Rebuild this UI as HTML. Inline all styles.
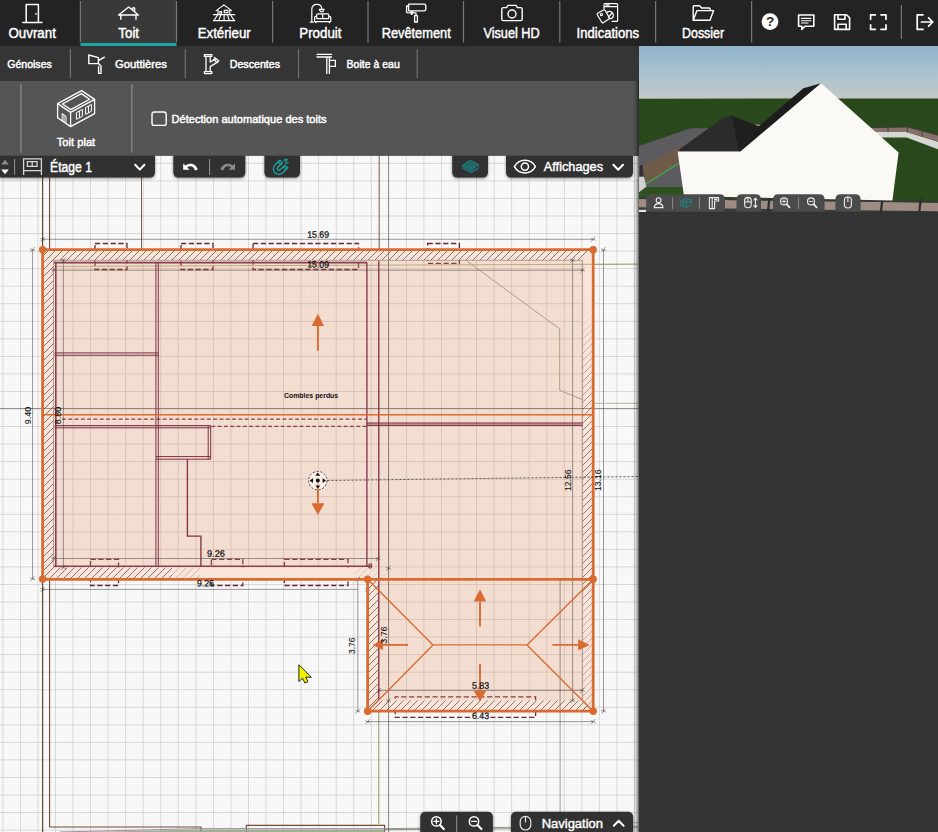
<!DOCTYPE html>
<html><head><meta charset="utf-8">
<style>
*{margin:0;padding:0}
html,body{width:938px;height:832px;overflow:hidden;background:#333}
svg{display:block;font-family:"Liberation Sans",sans-serif}
</style></head><body>
<svg width="938" height="832" viewBox="0 0 938 832">
<defs>
<pattern id="gmin" x="2.36" y="4.97" width="1.7545" height="1.7545" patternUnits="userSpaceOnUse"><path d="M0 0H1.8M0 0V1.8" stroke="#e5e5e5" stroke-width="0.5" fill="none"/></pattern>
<pattern id="gmaj" x="2.36" y="4.97" width="17.545" height="17.545" patternUnits="userSpaceOnUse"><path d="M0 0H17.6M0 0V17.6" stroke="#b4b4b4" stroke-width="0.95" fill="none"/></pattern>
<pattern id="hatch" width="4.95" height="4.95" patternUnits="userSpaceOnUse" patternTransform="rotate(45)"><path d="M2.5 0V5" stroke="#2a2222" stroke-width="0.5"/></pattern>
<pattern id="hatchl" width="4.95" height="4.95" patternUnits="userSpaceOnUse" patternTransform="rotate(45)"><path d="M2.5 0V5" stroke="#5a4a48" stroke-width="0.4"/></pattern>
<linearGradient id="sky" x1="0" y1="0" x2="0" y2="1"><stop offset="0" stop-color="#8fb3ca"/><stop offset="0.5" stop-color="#a9c3cf"/><stop offset="0.85" stop-color="#bcc6ca"/><stop offset="1" stop-color="#c6c6c6"/></linearGradient>
<linearGradient id="shr" x1="0" y1="0" x2="1" y2="0"><stop offset="0" stop-color="#000" stop-opacity="0"/><stop offset="0.5" stop-color="#000" stop-opacity="0.14"/><stop offset="1" stop-color="#000" stop-opacity="0.5"/></linearGradient>
<clipPath id="cv"><rect x="0" y="155" width="638.8" height="677"/></clipPath>
<clipPath id="c3d"><rect x="639" y="46" width="299" height="166"/></clipPath>
</defs>

<g clip-path="url(#cv)">
<rect x="0" y="155" width="639" height="677" fill="#fefefe"/>
<rect x="0" y="155" width="639" height="677" fill="url(#gmin)"/>
<rect x="0" y="155" width="639" height="677" fill="url(#gmaj)"/>
<g fill="none" stroke-width="1.2">
<path d="M42.6 155V832" stroke="#5e4a30"/>
<path d="M49.6 155V827H201V832" stroke="#6e4838" stroke-width="1.1"/>
<path d="M141.5 155V250" stroke="#7a5646" stroke-width="1"/>
<path d="M379.2 155V250" stroke="#7a5646" stroke-width="1"/>
<path d="M246.4 832V825.4H384.6V832" stroke="#7a4a3a"/>
</g>
<g fill="none" stroke-width="1">
<path d="M88 832L200 829.4H384.6V832Z" fill="#8fa586" fill-opacity="0.85" stroke="none"/><path d="M384.6 829.6L638 827.8" stroke="#86a07c" stroke-width="1.1"/>
<path d="M60 832L200 828.6H384L638 826.2" stroke="#a58a98"/>
<path d="M633 822.7H638" stroke="#c09aa0"/>
<path d="M378.8 711V826" stroke="#8c9a58"/>
</g>
<g fill="none" stroke="#6e2436" stroke-width="1.3" stroke-dasharray="5.2 2.6">
<path d="M95 243.5H127V269.5H95Z"/>
<path d="M181 243.5H213V269.5H181Z"/>
<path d="M253 243.5H358.5V269.5H253Z"/>
<path d="M427.6 243.5H459.4V263.4H427.6Z"/>
<path d="M90.5 559.3H118.5V585.5H90.5Z"/>
<path d="M211.4 559.3H242.8V585.5H211.4Z"/>
<path d="M284.4 559.3H348V585.5H284.4Z"/>
<path d="M470 717.4H395.2V696.9H535.6V717.4H490.5"/>
<path d="M62 419.1H366.3M211.4 426.3H366.3" stroke-dasharray="3.9 2.4"/>
</g>
<path d="M42.6 249.7H593.2V711.2H367.6V579.3H42.6Z" fill="#e88a5c" fill-opacity="0.245"/>
<path d="M42.6 249.7H593.2V711.2H367.6V579.3H42.6ZM53.5 260.3V567.5H378.8V700.6H582.6V260.3Z" fill="#f9e4d9" fill-rule="evenodd"/>
<clipPath id="hb1"><path d="M42.6 249.7H593.2L582.6 260.3H53.5V567.5H172V578.8H42.6Z"/></clipPath><clipPath id="hb1b"><path d="M172 567.5H200V578.8H172Z"/></clipPath><clipPath id="hb1c"><path d="M355 567.5H378.8V578.8H355Z"/></clipPath>
<clipPath id="hb2"><path d="M582.6 300H593.2V711.2H582.6Z"/></clipPath><linearGradient id="hfade" gradientUnits="userSpaceOnUse" x1="0" y1="300" x2="0" y2="711"><stop offset="0" stop-color="#2a2424" stop-opacity="0"/><stop offset="0.12" stop-color="#2a2424" stop-opacity="0.5"/><stop offset="0.35" stop-color="#1c1818" stop-opacity="0.95"/><stop offset="0.68" stop-color="#1c1818" stop-opacity="0.9"/><stop offset="0.75" stop-color="#2a2424" stop-opacity="0.55"/><stop offset="1" stop-color="#2a2424" stop-opacity="0.5"/></linearGradient>
<clipPath id="hb3"><path d="M367.6 579.3H378.8V700.6H582.6L593.2 711.2H367.6Z"/></clipPath>
<path d="M-568.0 860L142.0 150M-561.0 860L149.0 150M-554.0 860L156.0 150M-547.0 860L163.0 150M-540.0 860L170.0 150M-533.0 860L177.0 150M-526.0 860L184.0 150M-519.0 860L191.0 150M-512.0 860L198.0 150M-505.0 860L205.0 150M-498.0 860L212.0 150M-491.0 860L219.0 150M-484.0 860L226.0 150M-477.0 860L233.0 150M-470.0 860L240.0 150M-463.0 860L247.0 150M-456.0 860L254.0 150M-449.0 860L261.0 150M-442.0 860L268.0 150M-435.0 860L275.0 150M-428.0 860L282.0 150M-421.0 860L289.0 150M-414.0 860L296.0 150M-407.0 860L303.0 150M-400.0 860L310.0 150M-393.0 860L317.0 150M-386.0 860L324.0 150M-379.0 860L331.0 150M-372.0 860L338.0 150M-365.0 860L345.0 150M-358.0 860L352.0 150M-351.0 860L359.0 150M-344.0 860L366.0 150M-337.0 860L373.0 150M-330.0 860L380.0 150M-323.0 860L387.0 150M-316.0 860L394.0 150M-309.0 860L401.0 150M-302.0 860L408.0 150M-295.0 860L415.0 150M-288.0 860L422.0 150M-281.0 860L429.0 150M-274.0 860L436.0 150M-267.0 860L443.0 150M-260.0 860L450.0 150M-253.0 860L457.0 150M-246.0 860L464.0 150M-239.0 860L471.0 150M-232.0 860L478.0 150M-225.0 860L485.0 150M-218.0 860L492.0 150M-211.0 860L499.0 150M-204.0 860L506.0 150M-197.0 860L513.0 150M-190.0 860L520.0 150M-183.0 860L527.0 150M-176.0 860L534.0 150M-169.0 860L541.0 150M-162.0 860L548.0 150M-155.0 860L555.0 150M-148.0 860L562.0 150M-141.0 860L569.0 150M-134.0 860L576.0 150M-127.0 860L583.0 150M-120.0 860L590.0 150M-113.0 860L597.0 150M-106.0 860L604.0 150M-99.0 860L611.0 150M-92.0 860L618.0 150M-85.0 860L625.0 150M-78.0 860L632.0 150M-71.0 860L639.0 150M-64.0 860L646.0 150M-57.0 860L653.0 150M-50.0 860L660.0 150M-43.0 860L667.0 150M-36.0 860L674.0 150M-29.0 860L681.0 150M-22.0 860L688.0 150M-15.0 860L695.0 150M-8.0 860L702.0 150M-1.0 860L709.0 150M6.0 860L716.0 150M13.0 860L723.0 150M20.0 860L730.0 150M27.0 860L737.0 150M34.0 860L744.0 150M41.0 860L751.0 150M48.0 860L758.0 150M55.0 860L765.0 150M62.0 860L772.0 150M69.0 860L779.0 150M76.0 860L786.0 150M83.0 860L793.0 150M90.0 860L800.0 150M97.0 860L807.0 150M104.0 860L814.0 150M111.0 860L821.0 150M118.0 860L828.0 150M125.0 860L835.0 150M132.0 860L842.0 150M139.0 860L849.0 150M146.0 860L856.0 150M153.0 860L863.0 150M160.0 860L870.0 150M167.0 860L877.0 150M174.0 860L884.0 150M181.0 860L891.0 150M188.0 860L898.0 150M195.0 860L905.0 150M202.0 860L912.0 150M209.0 860L919.0 150M216.0 860L926.0 150M223.0 860L933.0 150M230.0 860L940.0 150M237.0 860L947.0 150M244.0 860L954.0 150M251.0 860L961.0 150M258.0 860L968.0 150M265.0 860L975.0 150M272.0 860L982.0 150M279.0 860L989.0 150M286.0 860L996.0 150M293.0 860L1003.0 150M300.0 860L1010.0 150M307.0 860L1017.0 150M314.0 860L1024.0 150M321.0 860L1031.0 150M328.0 860L1038.0 150M335.0 860L1045.0 150" clip-path="url(#hb1)" stroke="#1c1818" stroke-width="0.6" stroke-opacity="0.9" fill="none"/>
<path d="M-148.0 860L562.0 150M-141.0 860L569.0 150M-134.0 860L576.0 150M-127.0 860L583.0 150M-120.0 860L590.0 150M-113.0 860L597.0 150M-106.0 860L604.0 150M-99.0 860L611.0 150M-92.0 860L618.0 150M-85.0 860L625.0 150M-78.0 860L632.0 150M-71.0 860L639.0 150M-64.0 860L646.0 150M-57.0 860L653.0 150M-50.0 860L660.0 150" clip-path="url(#hb1b)" stroke="#2a2424" stroke-width="0.5" stroke-opacity="0.45" fill="none"/>
<path d="M27.0 860L737.0 150M34.0 860L744.0 150M41.0 860L751.0 150M48.0 860L758.0 150M55.0 860L765.0 150M62.0 860L772.0 150M69.0 860L779.0 150M76.0 860L786.0 150M83.0 860L793.0 150M90.0 860L800.0 150M97.0 860L807.0 150M104.0 860L814.0 150M111.0 860L821.0 150M118.0 860L828.0 150M125.0 860L835.0 150" clip-path="url(#hb1c)" stroke="#2a2424" stroke-width="0.45" stroke-opacity="0.3" fill="none"/>
<path d="M-8.0 860L702.0 150M-1.0 860L709.0 150M6.0 860L716.0 150M13.0 860L723.0 150M20.0 860L730.0 150M27.0 860L737.0 150M34.0 860L744.0 150M41.0 860L751.0 150M48.0 860L758.0 150M55.0 860L765.0 150M62.0 860L772.0 150M69.0 860L779.0 150M76.0 860L786.0 150M83.0 860L793.0 150M90.0 860L800.0 150M97.0 860L807.0 150M104.0 860L814.0 150M111.0 860L821.0 150M118.0 860L828.0 150M125.0 860L835.0 150M132.0 860L842.0 150M139.0 860L849.0 150M146.0 860L856.0 150M153.0 860L863.0 150M160.0 860L870.0 150M167.0 860L877.0 150M174.0 860L884.0 150M181.0 860L891.0 150M188.0 860L898.0 150M195.0 860L905.0 150M202.0 860L912.0 150M209.0 860L919.0 150M216.0 860L926.0 150M223.0 860L933.0 150M230.0 860L940.0 150M237.0 860L947.0 150M244.0 860L954.0 150M251.0 860L961.0 150M258.0 860L968.0 150M265.0 860L975.0 150M272.0 860L982.0 150M279.0 860L989.0 150M286.0 860L996.0 150M293.0 860L1003.0 150M300.0 860L1010.0 150M307.0 860L1017.0 150M314.0 860L1024.0 150M321.0 860L1031.0 150M328.0 860L1038.0 150M335.0 860L1045.0 150M342.0 860L1052.0 150M349.0 860L1059.0 150M356.0 860L1066.0 150M363.0 860L1073.0 150M370.0 860L1080.0 150M377.0 860L1087.0 150M384.0 860L1094.0 150M391.0 860L1101.0 150M398.0 860L1108.0 150M405.0 860L1115.0 150M412.0 860L1122.0 150M419.0 860L1129.0 150M426.0 860L1136.0 150M433.0 860L1143.0 150M440.0 860L1150.0 150M447.0 860L1157.0 150M454.0 860L1164.0 150" clip-path="url(#hb2)" stroke="url(#hfade)" stroke-width="0.55" stroke-opacity="1" fill="none"/>
<path d="M62.0 860L772.0 150M69.0 860L779.0 150M76.0 860L786.0 150M83.0 860L793.0 150M90.0 860L800.0 150M97.0 860L807.0 150M104.0 860L814.0 150M111.0 860L821.0 150M118.0 860L828.0 150M125.0 860L835.0 150M132.0 860L842.0 150M139.0 860L849.0 150M146.0 860L856.0 150M153.0 860L863.0 150M160.0 860L870.0 150M167.0 860L877.0 150M174.0 860L884.0 150M181.0 860L891.0 150M188.0 860L898.0 150M195.0 860L905.0 150M202.0 860L912.0 150M209.0 860L919.0 150M216.0 860L926.0 150M223.0 860L933.0 150M230.0 860L940.0 150M237.0 860L947.0 150M244.0 860L954.0 150M251.0 860L961.0 150M258.0 860L968.0 150M265.0 860L975.0 150M272.0 860L982.0 150M279.0 860L989.0 150M286.0 860L996.0 150M293.0 860L1003.0 150M300.0 860L1010.0 150M307.0 860L1017.0 150M314.0 860L1024.0 150M321.0 860L1031.0 150M328.0 860L1038.0 150M335.0 860L1045.0 150M342.0 860L1052.0 150M349.0 860L1059.0 150M356.0 860L1066.0 150M363.0 860L1073.0 150M370.0 860L1080.0 150M377.0 860L1087.0 150M384.0 860L1094.0 150M391.0 860L1101.0 150M398.0 860L1108.0 150M405.0 860L1115.0 150M412.0 860L1122.0 150M419.0 860L1129.0 150M426.0 860L1136.0 150M433.0 860L1143.0 150M440.0 860L1150.0 150M447.0 860L1157.0 150M454.0 860L1164.0 150" clip-path="url(#hb3)" stroke="#1c1818" stroke-width="0.6" stroke-opacity="0.9" fill="none"/>
<g fill="none" stroke="#333" stroke-width="0.65" stroke-opacity="0.75">
<path d="M388.5 155V832"/>
<path d="M0 408.5H638"/>
<path d="M63.4 259V567"/>
<path d="M572.6 260V700.6"/>
<path d="M560.1 579V832"/>
<path d="M53.5 270.2H582.6"/>
<path d="M53.5 558.5H378"/>
<path d="M378.8 690.4H582.4"/>
<path d="M42.6 239.3H593.2"/>
<path d="M32.6 249.7V578.8"/>
<path d="M603.5 249.7V711.2"/>
<path d="M42.6 589.4H358"/>
<path d="M357.8 579.3V711.2"/>
<path d="M367.6 721.6H593.2"/>
</g>
<g stroke="#333" stroke-width="0.6" stroke-opacity="0.85" fill="none">
<path d="M40.7 241.7L44.5 236.9M40.2 238.4L45.0 240.2"/>
<path d="M591.3 241.7L595.1 236.9M590.8 238.4L595.6 240.2"/>
<path d="M30.7 252.1L34.5 247.3M30.2 248.8L35.0 250.6"/>
<path d="M30.7 581.2L34.5 576.4M30.2 577.9L35.0 579.7"/>
<path d="M601.6 252.1L605.4 247.3M601.1 248.8L605.9 250.6"/>
<path d="M601.6 713.6L605.4 708.8M601.1 710.3L605.9 712.1"/>
<path d="M40.7 591.8L44.5 587.0M40.2 588.5L45.0 590.3"/>
<path d="M355.9 581.7L359.7 576.9M355.4 578.4L360.2 580.2"/>
<path d="M355.9 713.6L359.7 708.8M355.4 710.3L360.2 712.1"/>
<path d="M365.7 724.0L369.5 719.2M365.2 720.7L370.0 722.5"/>
<path d="M591.3 724.0L595.1 719.2M590.8 720.7L595.6 722.5"/>
<path d="M61.5 262.7L65.3 257.9M61.0 259.4L65.8 261.2"/>
<path d="M51.6 272.6L55.4 267.8M51.1 269.3L55.9 271.1"/>
<path d="M570.7 262.7L574.5 257.9M570.2 259.4L575.0 261.2"/>
<path d="M580.7 272.6L584.5 267.8M580.2 269.3L585.0 271.1"/>
<path d="M51.6 560.9L55.4 556.1M51.1 557.6L55.9 559.4"/>
<path d="M61.5 569.9L65.3 565.1M61.0 566.6L65.8 568.4"/>
<path d="M376.1 560.9L379.9 556.1M375.6 557.6L380.4 559.4"/>
<path d="M386.6 570.6L390.4 565.8M386.1 567.3L390.9 569.1"/>
<path d="M376.9 692.8L380.7 688.0M376.4 689.5L381.2 691.3"/>
<path d="M386.6 703.0L390.4 698.2M386.1 699.7L390.9 701.5"/>
<path d="M580.5 692.8L584.3 688.0M580.0 689.5L584.8 691.3"/>
<path d="M570.7 703.0L574.5 698.2M570.2 699.7L575.0 701.5"/>
<path d="M365.7 591.8L369.5 587.0M365.2 588.5L370.0 590.3"/>
</g>
<g fill="none" stroke-width="1">
<path d="M56 266.4L593 264.3" stroke="#a2965a" stroke-width="0.8" stroke-opacity="0.9"/>
<path d="M593 264.3L638 264.1" stroke="#9aa878" stroke-width="1.2"/>
<path d="M593 403.3H638" stroke="#a9b894" stroke-width="1"/>
<path d="M467.4 261.4L559.7 329V390.3L582.7 399.7" stroke="#9a9a78" stroke-width="0.9"/>
</g>
<g fill="none" stroke="#7d3040" stroke-width="1.3">
<path d="M54 262.6H367M55.8 262.4V566.3M54 566.3H371.4" stroke="#8a3f50" stroke-width="1.6"/>
<path d="M369 564H371.6V568H369Z" stroke-width="1"/>
<path d="M155.9 262.4V566.3M158.3 262.4V566.3" stroke-width="1"/>
<path d="M366.9 262.4V566.3"/>
<path d="M378.8 260.5V700"/>
<path d="M54.5 352.9H158.3M54.5 355.2H158.3" stroke-width="1"/>
<path d="M54.5 425.6H210.7M54.5 427.8H210.7" stroke-width="1"/>
<path d="M208.2 426V459.3M210.7 426V459.3" stroke-width="1"/>
<path d="M155.5 456.6H210.7M155.5 459.2H210.7" stroke-width="1"/>
<path d="M187.4 459V536.1H200.9V566.3"/>
<path d="M366.9 422.9H582.7M366.9 425.5H582.7" stroke-width="0.9"/>
</g>
<rect x="367" y="423" width="215.6" height="2.4" fill="#7d3040" fill-opacity="0.45"/>
<path d="M53.5 567.5V260.3H582.6V700.6" fill="none" stroke="#6a5a58" stroke-width="0.6" stroke-opacity="0.8"/>
<g fill="none" stroke="#d96b30" stroke-width="2.8" stroke-linejoin="round">
<path d="M42.6 249.7H593.2V711.2H367.6V579.3H42.6Z"/>
<path d="M367.6 579.3H593.2"/>
</g>
<g fill="none" stroke="#d96b30" stroke-width="1.4">
<path d="M42.6 414.7H593.2"/>
<path d="M367.6 579.3L433 644.9L367.6 711.2M593.2 579.3L527 644.9L593.2 711.2M433 644.9H527"/>
</g>
<circle cx="42.6" cy="249.7" r="3.7" fill="#d96b30"/>
<circle cx="593.2" cy="249.7" r="3.7" fill="#d96b30"/>
<circle cx="42.6" cy="579" r="3.7" fill="#d96b30"/>
<circle cx="367.6" cy="579.3" r="3.7" fill="#d96b30"/>
<circle cx="593.2" cy="579.3" r="3.7" fill="#d96b30"/>
<circle cx="367.6" cy="711.2" r="3.7" fill="#d96b30"/>
<circle cx="593.2" cy="711.2" r="3.7" fill="#d96b30"/>
<path d="M317.9 350.8L317.9 326.0" stroke="#d96b30" stroke-width="1.9" fill="none"/><path d="M317.9 313.8L324.1 326.0L311.7 326.0Z" fill="#d96b30"/>
<path d="M317.9 482.0L317.9 503.3" stroke="#d96b30" stroke-width="1.9" fill="none"/><path d="M317.9 515.0L311.5 503.3L324.3 503.3Z" fill="#d96b30"/>
<path d="M480.0 626.4L480.0 601.4" stroke="#d96b30" stroke-width="1.9" fill="none"/><path d="M480.0 589.2L486.2 601.4L473.8 601.4Z" fill="#d96b30"/>
<path d="M480.0 663.8L480.0 690.8" stroke="#d96b30" stroke-width="1.9" fill="none"/><path d="M480.0 701.4L473.8 690.8L486.2 690.8Z" fill="#d96b30"/>
<path d="M408.0 644.9L382.9 644.9" stroke="#d96b30" stroke-width="1.9" fill="none"/><path d="M372.7 644.9L382.9 639.8L382.9 650.0Z" fill="#d96b30"/>
<path d="M552.4 644.9L578.1 644.9" stroke="#d96b30" stroke-width="1.9" fill="none"/><path d="M589.7 644.9L578.1 650.5L578.1 639.3Z" fill="#d96b30"/>
<path d="M327.3 480.5L638 476.5" stroke="#444" stroke-width="0.8" stroke-dasharray="2.4 1.6" fill="none"/>
<circle cx="317.8" cy="480.6" r="9.2" fill="#fff" fill-opacity="0.55" stroke="#222" stroke-width="0.8" stroke-dasharray="2.2 1.6"/>
<circle cx="317.8" cy="480.6" r="2" fill="#111"/>
<path d="M317.8 472.4l2.4 3.4h-4.8zM317.8 488.8l2.4 -3.4h-4.8zM309.6 480.6l3.4 -2.4v4.8zM326 480.6l-3.4 -2.4v4.8z" fill="#111"/>
<g font-size="9.3" fill="#0a0a0a" stroke="#0a0a0a" stroke-width="0.08" font-weight="normal">
<text transform="translate(307.2 237.8) rotate(0.2)" font-size="9.4" stroke-width="0.22" textLength="21.8" lengthAdjust="spacingAndGlyphs">15.69</text>
<text transform="translate(307.2 267.6) rotate(0.2)" font-size="9.4" stroke-width="0.22" textLength="21.8" lengthAdjust="spacingAndGlyphs">15.09</text>
<text transform="translate(207.0 556.7) rotate(0.2)" font-size="9.4" stroke-width="0.22" textLength="17.8" lengthAdjust="spacingAndGlyphs">9.26</text>
<text transform="translate(196.9 586.5) rotate(0.2)" font-size="9.4" stroke-width="0.22" textLength="17.0" lengthAdjust="spacingAndGlyphs">9.26</text>
<text transform="translate(471.9 688.7) rotate(0.2)" font-size="9.4" stroke-width="0.22" textLength="17.2" lengthAdjust="spacingAndGlyphs">5.83</text>
<text transform="translate(471.9 719.0) rotate(0.2)" font-size="9.4" stroke-width="0.22" textLength="17.2" lengthAdjust="spacingAndGlyphs">6.43</text>
<text font-size="9.6" transform="translate(30.9 424.2) rotate(-90)" textLength="17.5" lengthAdjust="spacingAndGlyphs">9.40</text>
<text font-size="9.6" transform="translate(61.2 424.2) rotate(-90)" textLength="17.5" lengthAdjust="spacingAndGlyphs">8.80</text>
<text font-size="9.6" transform="translate(571.4 491) rotate(-90)" textLength="21.6" lengthAdjust="spacingAndGlyphs">12.56</text>
<text font-size="9.6" transform="translate(601.3 491) rotate(-90)" textLength="21.6" lengthAdjust="spacingAndGlyphs">13.16</text>
<text font-size="9.6" transform="translate(387 643.8) rotate(-90)" textLength="17.4" lengthAdjust="spacingAndGlyphs">3.76</text>
<text font-size="9.6" transform="translate(355.3 654) rotate(-90)" textLength="16.4" lengthAdjust="spacingAndGlyphs">3.76</text>
</g>
<text x="284" y="397.6" font-size="6.3" font-weight="bold" fill="#111" textLength="54.2" lengthAdjust="spacingAndGlyphs">Combles perdus</text>
<path d="M298.9 664.7V681.5L302.6 678.2L304.9 683L308 681.6L305.7 677.1L311.4 677.3Z" fill="#f2f200" stroke="#111" stroke-width="0.9" stroke-linejoin="round"/>
</g>
<rect x="0" y="0" width="938" height="46" fill="#232323"/>
<rect x="0" y="46" width="638.8" height="35" fill="#353535"/>
<rect x="0" y="81" width="638.8" height="74.7" fill="#555"/>
<rect x="638.8" y="46" width="300" height="786" fill="#333"/>
<g clip-path="url(#c3d)">
<rect x="639" y="46" width="299" height="53.5" fill="url(#sky)"/>
<path d="M639 98.7L938 98.4V212H639Z" fill="#29491c"/>
<path d="M639 146L690.5 128.2H760L700 200H639Z" fill="#5b5b60"/>
<path d="M641.5 166.6L682 145.8L679 163.2L646.2 183.8Z" fill="#6f5b49"/>
<path d="M646.2 183.8L679 163.2" stroke="#3fa546" stroke-width="1.4" fill="none"/>
<path d="M639 166L642.4 166L646 184.6L639 189Z" fill="#4a4a4e"/>
<path d="M640.2 165V176.6H642.6V165Z" fill="#2e2e32"/>
<path d="M639 176.8L644 176.8L646.4 186.6L639 192.4Z" fill="#d2d2d0"/>
<path d="M639 192.6L647 187H700V200H639Z" fill="#2d5220"/>
<path d="M868 132H906.6L938 141.7V149.3L906.6 137.4H868Z" fill="#d6d6d4"/>
<path d="M868 127.7L907.7 127L938 135.2V141.7L906.6 132H868Z" fill="#85706a"/>
<path d="M868 127.7L907.7 127L938 135.2" stroke="#3a3a3a" stroke-width="0.9" fill="none"/>
<path d="M888 127.4V132M907.4 127V132.2M922 131V136.8" stroke="#3a3a3a" stroke-width="0.9" fill="none"/>
<path d="M760 129H775V133H760Z" fill="#9a8478"/>
<path d="M639 192.6L647 187H684V196L639 199Z" fill="#2d5220"/>
<path d="M639 207.2L938 211.3V212H639Z" fill="#3a3a3c"/>
<path d="M639 209.8H646.2V212H639Z" fill="#e8e6e2"/>
<path d="M639 199L938 202.6V211.3L639 207.2Z" fill="#9e8c82"/>
<path d="M639 198.2L938 201.8" stroke="#37373b" stroke-width="1.7" fill="none"/>
<path d="M741 211.4L742.4 198.4" stroke="#2c2c30" stroke-width="2.2"/>
<path d="M768 211.4L769.4 198.4" stroke="#2c2c30" stroke-width="2.2"/>
<path d="M881 211.4L882.4 198.4" stroke="#2c2c30" stroke-width="2.2"/>
<path d="M919.4 211.4L920.8 198.4" stroke="#2c2c30" stroke-width="2.2"/>
<path d="M754 128L755 124.4L762.4 124.8L763 128Z" fill="#b09a90"/>
<path d="M738 151.6L759.4 125.8L803.4 88.2L821.1 83.3L741 152Z" fill="#1d1d1d"/>
<path d="M731.6 115.4L759.4 126.6L738 151.6Z" fill="#1f1f1f"/>
<path d="M677.6 151.6L680.6 148.4L721.6 119L731.6 115.4L738 151.6Z" fill="#2b2b2b"/>
<path d="M677.6 151.5H740.4L821.1 83.3L898.6 152.6L892.4 200.4L684 196Z" fill="#fbf9f5"/>
</g>
<path d="M646.2 211.6V199.6Q646.2 194.2 651.6 194.2H719.6Q725 194.2 725 199.6V211.8Z" fill="#4b4b4b"/>
<path d="M736.5 211.6V199.6Q736.5 194.2 741.9 194.2H755.6Q761 194.2 761 199.6V211.8Z" fill="#4b4b4b"/>
<path d="M773 211.6V199.6Q773 194.2 778.4 194.2H819.2Q824.6 194.2 824.6 199.6V211.8Z" fill="#4b4b4b"/>
<path d="M835.4 211.6V199.6Q835.4 194.2 840.8 194.2H855.2Q860.6 194.2 860.6 199.6V211.8Z" fill="#4b4b4b"/>
<g fill="none" stroke="#eee" stroke-width="1.1" stroke-linecap="round" stroke-linejoin="round">
<circle cx="658.6" cy="200.2" r="2.4"/><path d="M654.2 207.6C654.6 204.6 656.4 203.6 658.6 203.6C660.8 203.6 662.6 204.6 663 207.6Z"/>
<path d="M672.6 197.6V208.8M699.4 197.6V208.8M798.6 197.6V208.8" stroke="#8a8a8a" stroke-width="1"/>
<path d="M709.4 197.6H718.6V201H714.6V208.6H709.4ZM712.2 197.6V208.6M714.6 199.4H717" />
<rect x="744.6" y="197.4" width="6.6" height="10.4" rx="3.2"/><path d="M747.9 197.4V202M744.6 202H751.2M755.4 198.6V207M753.8 200L755.4 198.2L757 200M753.8 205.6L755.4 207.4L757 205.6"/>
<circle cx="784" cy="201.4" r="3.5"/><path d="M786.6 204.2L789.6 207.4" stroke-width="1.7"/><path d="M782.2 201.4H785.8M784 199.6V203.2" stroke-width="0.9"/>
<circle cx="811" cy="201.4" r="3.5"/><path d="M813.6 204.2L816.6 207.4" stroke-width="1.7"/><path d="M809.2 201.4H812.8" stroke-width="0.9"/>
<rect x="844.4" y="197" width="7" height="11" rx="3.4"/><path d="M847.9 197V201.6"/>
</g>
<g fill="none" stroke="#17908e" stroke-width="0.8" stroke-linejoin="round"><path d="M680.4 201.4L685.4 198.4L691.6 200.2V204.6L686.4 207.6L680.4 205.6ZM680.4 201.4L686.4 203.2L691.6 200.2M686.4 203.2V207.6M683 200L688.6 201.8M683.4 202.4V206.6"/></g>
<rect x="632.6" y="155" width="6.2" height="677" fill="url(#shr)"/>
<defs><filter id="ps" x="-10%" y="-30%" width="120%" height="170%"><feGaussianBlur stdDeviation="1.6"/></filter></defs>
<path d="M0 155H155V172.1Q155 177.6 149.5 177.6H0Z" fill="#000" fill-opacity="0.45" filter="url(#ps)" transform="translate(0 1)"/>
<path d="M173.3 155H245.3V172.1Q245.3 177.6 239.8 177.6H178.8Q173.3 177.6 173.3 172.1Z" fill="#000" fill-opacity="0.45" filter="url(#ps)" transform="translate(0 1)"/>
<path d="M264.4 155H300V172.1Q300 177.6 294.5 177.6H269.9Q264.4 177.6 264.4 172.1Z" fill="#000" fill-opacity="0.45" filter="url(#ps)" transform="translate(0 1)"/>
<path d="M452.2 155H488V172.1Q488 177.6 482.5 177.6H457.7Q452.2 177.6 452.2 172.1Z" fill="#000" fill-opacity="0.45" filter="url(#ps)" transform="translate(0 1)"/>
<path d="M506 155H633V172.1Q633 177.6 627.5 177.6H511.5Q506 177.6 506 172.1Z" fill="#000" fill-opacity="0.45" filter="url(#ps)" transform="translate(0 1)"/>
<path d="M420.3 832V817.3Q420.3 811.8 425.8 811.8H487.4Q492.9 811.8 492.9 817.3V832Z" fill="#000" fill-opacity="0.45" filter="url(#ps)" transform="translate(0 1)"/>
<path d="M511 832V817.3Q511 811.8 516.5 811.8H627.6Q633.1 811.8 633.1 817.3V832Z" fill="#000" fill-opacity="0.45" filter="url(#ps)" transform="translate(0 1)"/>
<path d="M0 155H155V172.1Q155 177.6 149.5 177.6H0Z" fill="#313131"/>
<path d="M173.3 155H245.3V172.1Q245.3 177.6 239.8 177.6H178.8Q173.3 177.6 173.3 172.1Z" fill="#313131"/>
<path d="M264.4 155H300V172.1Q300 177.6 294.5 177.6H269.9Q264.4 177.6 264.4 172.1Z" fill="#313131"/>
<path d="M452.2 155H488V172.1Q488 177.6 482.5 177.6H457.7Q452.2 177.6 452.2 172.1Z" fill="#313131"/>
<path d="M506 155H633V172.1Q633 177.6 627.5 177.6H511.5Q506 177.6 506 172.1Z" fill="#313131"/>
<path d="M420.3 832V817.3Q420.3 811.8 425.8 811.8H487.4Q492.9 811.8 492.9 817.3V832Z" fill="#313131"/>
<path d="M511 832V817.3Q511 811.8 516.5 811.8H627.6Q633.1 811.8 633.1 817.3V832Z" fill="#313131"/>
<rect x="0" y="150" width="638.8" height="5.7" fill="#555"/>
<path d="M1.2 164.4L5 159.8L8.8 164.4Z" fill="#8c8c8c"/><path d="M1.2 169.6L5 174.2L8.8 169.6Z" fill="#fff"/>
<rect x="14" y="159" width="1.1" height="15.6" fill="#8a8a8a"/>
<g fill="none" stroke="#d8d8d8" stroke-width="1.3"><path d="M23.6 170.6V158.8H41.4V170.6ZM23.6 170.6V175M41.4 170.6V175M27.4 161.6H32.2V166.4H27.4ZM32.2 161.6H37V166.4H32.2Z"/></g>
<text x="50" y="172.2" font-size="14" font-weight="normal" fill="#fff" stroke="#fff" stroke-width="0.45" stroke-linejoin="round" text-anchor="start" textLength="42" lengthAdjust="spacingAndGlyphs">Étage 1</text>
<path d="M135.2 164.8L139.8 169.6L144.4 164.8" fill="none" stroke="#fff" stroke-width="2" stroke-linecap="round" stroke-linejoin="round"/>
<path d="M183.2 163.4V169.8H189.6L187.2 167.4C189.6 165.6 193.6 165.8 195 170.4L197.8 169.6C195.8 163 189.4 162.4 185.4 165.6Z" fill="#fff"/>
<rect x="209" y="159" width="1.1" height="16" fill="#8a8a8a"/>
<path d="M235 163.4V169.8H228.6L231 167.4C228.6 165.6 224.6 165.8 223.2 170.4L220.4 169.6C222.4 163 228.8 162.4 232.8 165.6Z" fill="#8a8a8a"/>
<g fill="none" stroke="#19a7a3" stroke-width="1.3" stroke-linejoin="round" stroke-linecap="round"><path d="M279.6 160.2L275.6 164.2C272.4 167.4 273 171 275 172.8C277 174.8 280.6 175 283.6 172L287.6 168L284.8 165.2L280.8 169.2C279.4 170.6 278.4 170.4 277.8 169.8C277.2 169.2 277 168.2 278.4 166.8L282.4 162.8ZM278 161.8L280.8 164.6M283.2 166.8L286 169.6M284 160.4L286 159M285.6 163L288.2 162.8M287.4 159.6L285.6 161.4"/></g>
<g fill="none" stroke="#12a0a0" stroke-width="0.8" stroke-opacity="0.9" stroke-linejoin="round"><path d="M462.6 165.6L469.6 160L478.2 164.4V168.6L471 172.4L462.6 168.4ZM462.6 165.6L471 169.4L478.2 164.4M471 169.4V172.4M464.4 164.4L472.4 168.2M466.2 163L474.2 166.8M468 161.6L476 165.4M464.8 166.6V169.4M467 167.6V170.4M469 168.6V171.4M473 168.2V171.2M475.4 166.6V169.8"/></g>
<path d="M462.6 165.6L469.6 160L478.2 164.4L471 169.4Z" fill="#19a7a3" fill-opacity="0.22"/>
<path d="M514.4 166.6C519 158.2 530.8 158.2 535.4 166.6C530.8 175 519 175 514.4 166.6Z" fill="none" stroke="#fff" stroke-width="1.5"/><circle cx="524.9" cy="166.6" r="3.6" fill="none" stroke="#fff" stroke-width="1.5"/>
<text x="543.8" y="171.4" font-size="13.6" font-weight="normal" fill="#fff" stroke="#fff" stroke-width="0.45" stroke-linejoin="round" text-anchor="start" textLength="59.2" lengthAdjust="spacingAndGlyphs">Affichages</text>
<path d="M613.4 164.8L618.2 169.8L623 164.8" fill="none" stroke="#fff" stroke-width="2" stroke-linecap="round" stroke-linejoin="round"/>
<g fill="none" stroke="#fff" stroke-width="1.5" stroke-linecap="round"><circle cx="436.4" cy="821.4" r="4.7"/><path d="M439.9 825L443.8 829" stroke-width="2.2"/><path d="M434 821.4H438.8M436.4 819V823.8" stroke-width="1.3"/>
<circle cx="474" cy="821.4" r="4.7"/><path d="M477.5 825L481.4 829" stroke-width="2.2"/><path d="M471.6 821.4H476.4" stroke-width="1.3"/></g>
<rect x="456.1" y="815.4" width="1.1" height="16.6" fill="#8a8a8a"/>
<g fill="none" stroke="#e8e8e8" stroke-width="1.2"><rect x="520.2" y="816.4" width="10.6" height="13.6" rx="5.2"/><path d="M525.5 816.4V822.4"/></g>
<text x="541.7" y="827.6" font-size="13.6" font-weight="normal" fill="#fff" stroke="#fff" stroke-width="0.45" stroke-linejoin="round" text-anchor="start" textLength="61.3" lengthAdjust="spacingAndGlyphs">Navigation</text>
<path d="M613.8 825.8L618.7 820.8L623.6 825.8" fill="none" stroke="#fff" stroke-width="2" stroke-linecap="round" stroke-linejoin="round"/>
<rect x="80.5" y="0" width="96" height="46" fill="#393939"/>
<rect x="80.5" y="43" width="96" height="3" fill="#19a7a3"/>
<rect x="79.80000000000001" y="1" width="1.2" height="41.5" fill="#777"/>
<rect x="175.9" y="1" width="1.2" height="41.5" fill="#777"/>
<rect x="272.0" y="1" width="1.2" height="41.5" fill="#777"/>
<rect x="367.4" y="1" width="1.2" height="41.5" fill="#777"/>
<rect x="462.9" y="1" width="1.2" height="41.5" fill="#777"/>
<rect x="559.1999999999999" y="1" width="1.2" height="41.5" fill="#777"/>
<rect x="655.0" y="1" width="1.2" height="41.5" fill="#777"/>
<rect x="751.0" y="1" width="1.2" height="41.5" fill="#777"/>
<rect x="900.8" y="5" width="1.2" height="34" fill="#777"/>
<text x="32.2" y="37.6" font-size="14" font-weight="normal" fill="#fff" stroke="#fff" stroke-width="0.45" stroke-linejoin="round" text-anchor="middle" textLength="47.4" lengthAdjust="spacingAndGlyphs">Ouvrant</text>
<text x="128.7" y="37.6" font-size="14" font-weight="normal" fill="#fff" stroke="#fff" stroke-width="0.45" stroke-linejoin="round" text-anchor="middle" textLength="20.7" lengthAdjust="spacingAndGlyphs">Toit</text>
<text x="224.2" y="37.6" font-size="14" font-weight="normal" fill="#fff" stroke="#fff" stroke-width="0.45" stroke-linejoin="round" text-anchor="middle" textLength="53" lengthAdjust="spacingAndGlyphs">Extérieur</text>
<text x="320.4" y="37.6" font-size="14" font-weight="normal" fill="#fff" stroke="#fff" stroke-width="0.45" stroke-linejoin="round" text-anchor="middle" textLength="42.3" lengthAdjust="spacingAndGlyphs">Produit</text>
<text x="416.2" y="37.6" font-size="14" font-weight="normal" fill="#fff" stroke="#fff" stroke-width="0.45" stroke-linejoin="round" text-anchor="middle" textLength="69" lengthAdjust="spacingAndGlyphs">Revêtement</text>
<text x="511.6" y="37.6" font-size="14" font-weight="normal" fill="#fff" stroke="#fff" stroke-width="0.45" stroke-linejoin="round" text-anchor="middle" textLength="56.3" lengthAdjust="spacingAndGlyphs">Visuel HD</text>
<text x="607.8" y="37.6" font-size="14" font-weight="normal" fill="#fff" stroke="#fff" stroke-width="0.45" stroke-linejoin="round" text-anchor="middle" textLength="62.4" lengthAdjust="spacingAndGlyphs">Indications</text>
<text x="703.1" y="37.6" font-size="14" font-weight="normal" fill="#fff" stroke="#fff" stroke-width="0.45" stroke-linejoin="round" text-anchor="middle" textLength="42" lengthAdjust="spacingAndGlyphs">Dossier</text>
<g fill="none" stroke="#fff" stroke-width="1.5" stroke-linejoin="round" stroke-linecap="round">
<path d="M26.2 22.4V4.4H38.4V22.4M22.8 22.6H42"/><circle cx="36" cy="13.8" r="0.9" fill="#fff" stroke="none"/>
<path d="M118.6 15L128.7 7L138.4 15M120.8 15V19.3M136 15V19.3M118.6 15H138.4M132.4 9.6V8H134.6V11.6" stroke-width="1.4"/>
<g stroke-width="1.15"><path d="M216.2 10.6L223.9 4.9L231.6 10.6M218 9.8V14.3M229.8 9.8V14.3M219.8 14.3V11.6H221.6V14.3M224.2 10.4H228V12.6H224.2ZM213.4 14.6H234.8M217.6 15L214 20.4M220.8 15L218.8 20.4M224.1 15V20.4M227.4 15L229.4 20.4M230.6 15L234.2 20.4M213.4 20.6H234.8"/></g>
<g stroke-width="1.2"><path d="M311.8 22V9.5C311.8 5.6 314.5 4.3 317 4.3C320 4.3 321.6 6.2 321.8 8.6M310.3 22.2H313.3M319.4 9.4H324L323 11.6H320.4ZM314.6 21.6V17.4C314.6 15.9 316.8 15.9 316.8 17.4V18.6H328.6V17.4C328.6 15.9 330.8 15.9 330.8 17.4V21.6ZM316.6 17V15.2C316.6 14.3 317.3 13.8 318 13.8H327.4C328.1 13.8 328.8 14.3 328.8 15.2V17M322.7 14V18.4M316 21.8V22.8M329.4 21.8V22.8"/></g>
<g stroke-width="1.3"><path d="M408.6 4.2H424.2C425.2 4.2 425.8 4.8 425.8 5.8V9.2C425.8 10.2 425.2 10.8 424.2 10.8H408.6ZM408.6 6H406.6V12.6L416 12.8V15.6M414.6 15.6H417.4V22H414.6ZM411 10.8V13.2C411 14.6 412.6 14.6 412.6 13.2V10.8"/></g>
<path d="M501.8 9.2C501.8 8.3 502.5 7.6 503.4 7.6H506.6L508 5.4H516L517.4 7.6H520.6C521.5 7.6 522.2 8.3 522.2 9.2V19C522.2 19.9 521.5 20.6 520.6 20.6H503.4C502.5 20.6 501.8 19.9 501.8 19Z" stroke-width="1.4"/><circle cx="512" cy="14" r="4" stroke-width="1.4"/>
<g stroke-width="1.2"><path d="M604 8.4V4.6C604 4 604.4 3.6 605 3.6H616.6C617.2 3.6 617.6 4 617.6 4.6V20.4C617.6 21 617.2 21.4 616.6 21.4H612M604 6.6H617.6M606 5.1H609"/><path d="M597.6 13.2L603 10.2C604 9.7 605 10 605.6 11L609.6 18.4L603.6 22.6C602.8 23 602 22.8 601.6 22L597.4 15C597 14.3 597 13.6 597.6 13.2Z"/><circle cx="601.4" cy="14.6" r="1.1"/><path d="M607 12.2C609.4 10.4 613 11.6 613.4 14.8C613.7 17.4 611.6 18.8 610 18.6M608.6 17L612.4 12.6"/></g>
<path d="M693.2 20.2V7C693.2 6.3 693.7 5.8 694.4 5.8H699.6L701.6 8H709C709.7 8 710.2 8.5 710.2 9.2V10.6M693.2 20.2L697 10.6H713.6L710 20.2Z" stroke-width="1.4"/>
</g>
<circle cx="770" cy="21.6" r="8.4" fill="#fff"/>
<text x="770" y="26.4" font-size="13.5" font-weight="bold" fill="#232323" text-anchor="middle">?</text>
<g fill="none" stroke="#fff" stroke-width="1.6" stroke-linejoin="round" stroke-linecap="round">
<path d="M798.6 15H813.8V26.2H805L801.8 29.4V26.2H798.6Z"/><path d="M801.4 18.4H811M801.4 20.7H811M801.4 23H808" stroke-width="1.1"/>
<path d="M834.6 14.8H846.6L849.6 17.8V29.4H834.6ZM838 14.8V19.2H845V14.8M838 29.4V24.2H846.2V29.4" />
<path d="M870.6 19.2V14.8H875.4M881 14.8H886V19.2M886 24.8V29.4H881M875.4 29.4H870.6V24.8" stroke-width="1.7"/>
<path d="M923 14.8H917.2V29.4H923M921.4 22H932.4M928.6 17.8L932.8 22L928.6 26.2" stroke-width="1.7"/>
</g>
<rect x="69.80000000000001" y="49" width="1.2" height="29" fill="#707070"/>
<rect x="184.70000000000002" y="49" width="1.2" height="29" fill="#707070"/>
<rect x="297.9" y="49" width="1.2" height="29" fill="#707070"/>
<rect x="416.59999999999997" y="49" width="1.2" height="29" fill="#707070"/>
<text x="7.2" y="67.7" font-size="11" font-weight="normal" fill="#fff" stroke="#fff" stroke-width="0.45" stroke-linejoin="round" text-anchor="start" textLength="44.6" lengthAdjust="spacingAndGlyphs">Génoises</text>
<text x="115" y="67.7" font-size="11" font-weight="normal" fill="#fff" stroke="#fff" stroke-width="0.45" stroke-linejoin="round" text-anchor="start" textLength="52" lengthAdjust="spacingAndGlyphs">Gouttières</text>
<text x="229.7" y="67.7" font-size="11" font-weight="normal" fill="#fff" stroke="#fff" stroke-width="0.45" stroke-linejoin="round" text-anchor="start" textLength="50.4" lengthAdjust="spacingAndGlyphs">Descentes</text>
<text x="346.6" y="67.7" font-size="11" font-weight="normal" fill="#fff" stroke="#fff" stroke-width="0.45" stroke-linejoin="round" text-anchor="start" textLength="53.2" lengthAdjust="spacingAndGlyphs">Boite à eau</text>
<g fill="none" stroke="#fff" stroke-width="1.4" stroke-linejoin="round" stroke-linecap="round">
<path d="M88.8 55L98.4 57.6V63.6H88.8ZM98.4 60.6L104.4 57.2M98.4 63.6L101 66V73.4H98.6V66.6"/>
<path d="M206 56.6V71.4M210.2 56.6V62L215.6 59.2M210.2 71.4V66.6L217 62.4M204.4 56.4H211.8V54.6H204.4ZM204.4 71.6H211.8V73.6H204.4ZM214.4 57.4L218.6 60.8L217.4 62.6L213.4 59.4" stroke-width="1.3"/>
<path d="M317 54.4H331.6M317 57H331.6M326.8 57V73.4M329.4 57V73.4M329.4 60.4H335.4V66.4H329.4" stroke-width="1.3"/>
</g>
<rect x="20.4" y="84" width="1.2" height="68.5" fill="#8c8c8c"/>
<rect x="131.2" y="84" width="1.2" height="68.5" fill="#8c8c8c"/>
<text x="76" y="145.8" font-size="11" font-weight="normal" fill="#fff" stroke="#fff" stroke-width="0.45" stroke-linejoin="round" text-anchor="middle" textLength="38.4" lengthAdjust="spacingAndGlyphs">Toit plat</text>
<g fill="none" stroke="#fff" stroke-width="1.3" stroke-linejoin="round">
<path d="M57.6 103.6L81.6 90.6L94.6 99.4V113.6L70.6 126.6L57.6 117.8ZM57.6 103.6L70.6 112.4L94.6 99.4M70.6 112.4V126.6M62.4 104L81.4 93.6L89.6 99.2L70.8 109.6Z"/>
<path d="M62.2 120.8V113.6L66 116.2V123.4M64 115V122" stroke-width="1"/>
<path d="M76.4 112.6L82.4 109.4V116.2L76.4 119.4ZM79.4 111V117.8M85.6 107.6L91.4 104.4V111.2L85.6 114.4ZM88.5 106V112.8" stroke-width="1"/>
</g>
<rect x="152" y="112" width="14.2" height="13.4" rx="2.2" fill="none" stroke="#fff" stroke-width="1.4"/>
<text x="171.6" y="122.6" font-size="11" font-weight="normal" fill="#fff" stroke="#fff" stroke-width="0.45" stroke-linejoin="round" text-anchor="start" textLength="155" lengthAdjust="spacingAndGlyphs">Détection automatique des toits</text>
<rect x="632.6" y="81" width="6.2" height="75" fill="url(#shr)"/>
</svg></body></html>
